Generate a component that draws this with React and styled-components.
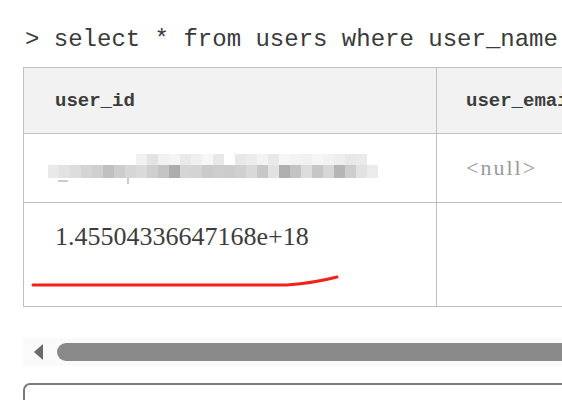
import React from "react";
import styled, { createGlobalStyle } from "styled-components";

const GlobalStyle = createGlobalStyle`
  html, body {
    margin: 0;
    padding: 0;
    background: #ffffff;
  }
  body {
    font-family: "Liberation Mono", "DejaVu Sans Mono", monospace;
    color: #333;
  }
`;

const Page = styled.div`
  width: 562px;
  height: 400px;
  overflow: hidden;
  padding-left: 23px;
  box-sizing: border-box;
`;

const Command = styled.div`
  height: 67px;
  box-sizing: border-box;
  padding: 14px 0 0 2px;
  font-family: "Liberation Mono", monospace;
  font-size: 24px;
  line-height: 52px;
  color: #3a3a3a;
  white-space: nowrap;
`;

const Table = styled.table`
  border-collapse: collapse;
  table-layout: fixed;
  width: 713px;
`;

const Row = styled.tr`
  height: ${(p) => p.$h}px;
`;

const HeadCell = styled.th`
  box-sizing: border-box;
  width: ${(p) => p.$w}px;
  background: #f2f2f2;
  border: 1px solid #c0c0c0;
  padding: 0 0 0 ${(p) => p.$pad}px;
  text-align: left;
  font-family: "Liberation Mono", monospace;
  font-size: 19px;
  font-weight: bold;
  color: #3c3c3c;
  white-space: nowrap;
  overflow: hidden;
`;

const Cell = styled.td`
  box-sizing: border-box;
  position: relative;
  border: 1px solid #c0c0c0;
  padding: ${(p) => (p.$top ? "18px 0 0 31px" : "0 0 0 29px")};
  vertical-align: ${(p) => (p.$top ? "top" : "middle")};
  white-space: nowrap;
  overflow: hidden;
`;

const Number = styled.span`
  font-family: "Liberation Serif", serif;
  font-size: 26px;
  line-height: 32px;
  color: #3c3c3c;
`;

const Null = styled.span`
  font-family: "Liberation Serif", serif;
  font-size: 22px;
  letter-spacing: 2px;
  color: #9a9a9a;
`;

const Mosaic = styled.svg`
  display: block;
  margin-left: -5px;
`;

const Annotation = styled.svg`
  position: absolute;
  left: 0;
  top: 0;
  pointer-events: none;
`;

const ScrollTrack = styled.div`
  margin-top: 31px;
  height: 28px;
  background: #fafafa;
  display: flex;
  align-items: center;
  gap: 14px;
  padding-left: 11px;
`;

const Arrow = styled.div`
  width: 0;
  height: 0;
  border-top: 8px solid transparent;
  border-bottom: 8px solid transparent;
  border-right: 9px solid #6a6a6a;
`;

const Thumb = styled.div`
  flex: 1;
  height: 18px;
  background: #8a8a8a;
  border-radius: 9px 0 0 9px;
`;

const InputBox = styled.div`
  margin-top: 17px;
  height: 40px;
  border-top: 2px solid #7a7a7a;
  border-left: 2px solid #7a7a7a;
  border-top-left-radius: 7px;
`;

const topShades = [
  null, null, null, null, null, null, null, null,
  "#f1f1f1", "#e3e3e3", "#f1f1f1", "#f5f5f5", "#e9e9e9", "#f0f0f0", "#f7f7f7", "#e8e8e8",
  null, "#e8e8e8", "#ececec", "#f3f3f3", "#e9e9e9", "#f5f5f5", "#f3f3f3", "#f1f1f1",
  "#f5f5f5", "#f2f2f2", "#eeeeee", "#e8e8e8", "#eaeaea", null, null,
];
const bottomShades = [
  "#e9e9e9", "#e2e2e2", "#dcdcdc", "#d4d4d4", "#cfcfcf", "#c0c0c0", "#cdcdcd", "#d6d6d6",
  "#dadada", "#cfcfcf", "#c4c4c4", "#adadad", "#d6d6d6", "#d4d4d4", "#cacaca", "#cdcdcd",
  "#cccccc", "#d0d0d0", "#d9d9d9", "#c8c8c8", "#e2e2e2", "#afafaf", "#c3c3c3", "#dcdcdc",
  "#c6c6c6", "#d6d6d6", "#b5b5b5", "#cdcdcd", "#e2e2e2", "#ebebeb",
];

function BlurredValue() {
  const size = 11;
  return (
    <Mosaic width="340" height="32" viewBox="0 0 340 32">
      <path d="M10 29 h10 M80 26 v6" stroke="#bcbcbc" strokeWidth="1.5" fill="none" />
      {topShades.map((c, i) =>
        c ? <rect key={"t" + i} x={i * size} y="2" width={size} height={size} fill={c} /> : null
      )}
      {bottomShades.map((c, i) => (
        <rect key={"b" + i} x={i * size} y="13" width={size} height="13" fill={c} />
      ))}
    </Mosaic>
  );
}

export default function App() {
  return (
    <>
      <GlobalStyle />
      <Page>
        <Command>&gt; select * from users where user_name</Command>
        <Table>
          <tbody>
            <Row $h={66}>
              <HeadCell $w={413} $pad={31}>user_id</HeadCell>
              <HeadCell $w={300} $pad={29}>user_email</HeadCell>
            </Row>
            <Row $h={69}>
              <Cell>
                <BlurredValue />
              </Cell>
              <Cell>
                <Null>&lt;null&gt;</Null>
              </Cell>
            </Row>
            <Row $h={104}>
              <Cell $top>
                <Number>1.45504336647168e+18</Number>
                <Annotation width="413" height="104" viewBox="0 0 413 104">
                  <path
                    d="M9 82 L263 82 Q290 80 313 74"
                    stroke="#f2211a"
                    strokeWidth="3"
                    strokeLinecap="round"
                    fill="none"
                  />
                </Annotation>
              </Cell>
              <Cell $top />
            </Row>
          </tbody>
        </Table>
        <ScrollTrack>
          <Arrow />
          <Thumb />
        </ScrollTrack>
        <InputBox />
      </Page>
    </>
  );
}
